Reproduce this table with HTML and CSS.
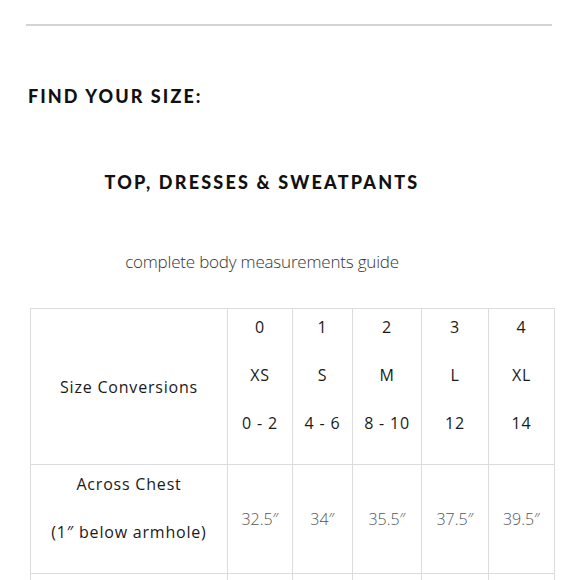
FILE: index.html
```html
<!DOCTYPE html>
<html>
<head>
<meta charset="utf-8">
<link rel="stylesheet" href="styles.css">
</head>
<body>
<div class="page">
  <hr class="rule">
  <h2 class="find">FIND YOUR SIZE:</h2>
  <h3 class="cat">TOP, DRESSES &amp; SWEATPANTS</h3>
  <p class="guide">complete body measurements guide</p>
  <table class="sizes">
    <colgroup>
      <col class="c-label">
      <col class="c0"><col class="c1"><col class="c2"><col class="c3"><col class="c4">
    </colgroup>
    <tr class="r-conv">
      <td class="label mid">Size Conversions</td>
      <td class="size">0<br><br>XS<br><br>0 - 2</td>
      <td class="size">1<br><br>S<br><br>4 - 6</td>
      <td class="size">2<br><br>M<br><br>8 - 10</td>
      <td class="size">3<br><br>L<br><br>12</td>
      <td class="size">4<br><br>XL<br><br>14</td>
    </tr>
    <tr class="r-chest">
      <td class="label top">Across Chest<br><br>(1″ below armhole)</td>
      <td class="val">32.5″</td>
      <td class="val">34″</td>
      <td class="val">35.5″</td>
      <td class="val">37.5″</td>
      <td class="val">39.5″</td>
    </tr>
    <tr class="r-next">
      <td></td><td></td><td></td><td></td><td></td><td></td>
    </tr>
  </table>
</div>
</body>
</html>
```

FILE: styles.css
```css
html, body {
  margin: 0;
  padding: 0;
  background: #fff;
}
body {
  font-family: "Open Sans", "Lato", sans-serif;
  color: #111;
  overflow: hidden;
  height: 580px;
}
.page {
  padding-top: 24px;
}
.rule {
  margin: 0 0 0 26px;
  width: 526px;
  border: 0;
  border-top: 2px solid #d4d4d4;
  height: 0;
}
.find {
  margin: 58px 0 0 28px;
  font-family: "Lato", sans-serif;
  font-size: 18px;
  font-weight: 900;
  letter-spacing: 2.1px;
  line-height: 24px;
  color: #111;
}
.cat {
  margin: 62px 0 0 0;
  width: 524px;
  text-align: center;
  font-family: "Lato", sans-serif;
  font-size: 18px;
  font-weight: 900;
  letter-spacing: 2.2px;
  line-height: 24px;
  color: #111;
}
.guide {
  margin: 56px 0 0 0;
  width: 524px;
  text-align: center;
  font-size: 17px;
  font-weight: 300;
  letter-spacing: -0.2px;
  line-height: 24px;
  color: #333;
}
.sizes {
  margin: 34px 0 0 30px;
  border-collapse: collapse;
  table-layout: fixed;
  width: 524px;
  font-size: 16px;
  letter-spacing: 0.8px;
  line-height: 24px;
  text-align: center;
  color: #1a1a1a;
}
.sizes td {
  border: 1px solid #dcdcdc;
  padding: 0;
}
.c-label { width: 197px; }
.c0 { width: 65px; }
.c1 { width: 60px; }
.c2 { width: 69px; }
.c3 { width: 67px; }
.c4 { width: 66px; }
.r-conv { height: 156px; }
.r-chest { height: 109px; }
.r-next { height: 100px; }
.sizes td.size {
  vertical-align: top;
  padding-top: 6px;
}
.mid { vertical-align: middle; }
.sizes td.top {
  vertical-align: top;
  padding-top: 7px;
}
.val {
  vertical-align: middle;
  font-weight: 300;
  letter-spacing: 0;
  color: #555;
}
```
